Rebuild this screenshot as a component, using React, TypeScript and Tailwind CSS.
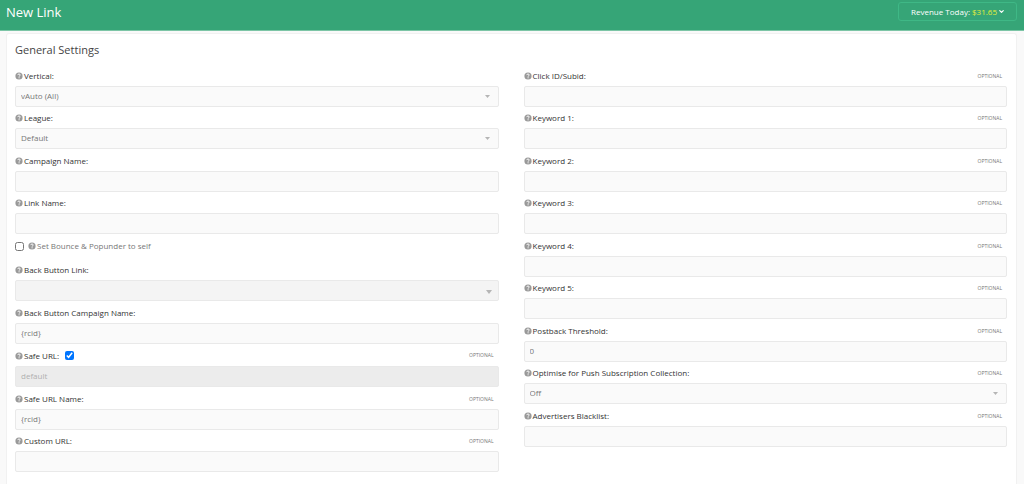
import { ReactNode, useId, useState } from "react";
import { ChevronDown } from "lucide-react";
import clsx from "clsx";

interface FieldProps {
  label: string;
  optional?: boolean;
  value?: string;
  disabled?: boolean;
  options?: string[];
  largeCaret?: boolean;
  tall?: boolean;
  children?: ReactNode;
}

const rowClass = "odd:mb-px even:mb-0.5";

const controlClass =
  "block h-[21px] w-full appearance-none rounded-[2px] border border-[#e9e9e9] px-[5px] pb-0.5 text-[8px] text-[#777] outline-none focus:border-[#36a577]";

function HelpIcon() {
  return (
    <svg viewBox="0 0 16 16" className="size-2 shrink-0">
      <circle cx="8" cy="8" r="7.2" fill="#999" />
      <path
        d="M5.6 6.2C5.7 4.6 6.7 3.9 8 3.9s2.4.8 2.4 2.1C10.4 7.6 8.2 7.6 8.2 9.4"
        fill="none"
        stroke="#fff"
        strokeWidth="1.9"
      />
      <rect x="7.1" y="10.6" width="2.1" height="2" fill="#fff" />
    </svg>
  );
}

function Caret({ large }: { large?: boolean }) {
  return (
    <svg
      viewBox="0 0 6 3"
      preserveAspectRatio="none"
      className={clsx(
        "pointer-events-none absolute fill-[#b5b5b5]",
        large ? "right-[7px] top-2.5 h-1 w-1.5" : "right-[9px] top-[9px] h-[3px] w-[5px]",
      )}
    >
      <path d="M0 0h6L3 3z" />
    </svg>
  );
}

function Field({
  label,
  optional,
  value = "",
  disabled,
  options,
  largeCaret,
  tall,
  children,
}: FieldProps) {
  const id = useId();
  const [current, setCurrent] = useState(value);

  return (
    <div className={rowClass}>
      <div className={clsx("flex items-center", tall ? "h-[21px]" : "h-5")}>
        <label
          htmlFor={id}
          className="flex items-center gap-px text-[8px] text-[#333]"
        >
          <HelpIcon />
          {label}
        </label>
        {children}
        {optional && (
          <span className="ml-auto pr-[5px] pt-px text-[5px] text-[#777]">
            OPTIONAL
          </span>
        )}
      </div>
      {options ? (
        <div className="relative">
          <select
            id={id}
            value={current}
            onChange={(e) => setCurrent(e.target.value)}
            className={clsx(
              controlClass,
              largeCaret ? "bg-[#f4f4f4]" : "bg-[#fafafa]",
            )}
          >
            {options.map((option) => (
              <option key={option}>{option}</option>
            ))}
          </select>
          <Caret large={largeCaret} />
        </div>
      ) : (
        <input
          id={id}
          type="text"
          value={current}
          disabled={disabled}
          onChange={(e) => setCurrent(e.target.value)}
          className={clsx(
            controlClass,
            disabled ? "bg-[#ececec] text-[#b0b0b0]" : "bg-[#fafafa]",
          )}
        />
      )}
    </div>
  );
}

export default function App() {
  const [bounceToSelf, setBounceToSelf] = useState(false);
  const [safeUrl, setSafeUrl] = useState(true);

  return (
    <div className="flex min-h-screen flex-col bg-[#f9f9f9] font-['Open_Sans',sans-serif]">
      <header className="flex h-[31px] items-start justify-between border-b border-[#7cc5a6] bg-[#36a577] pl-1.5 pr-[7px] pt-0.5">
        <h1 className="text-[13px] leading-5 text-white">New Link</h1>
        <button
          type="button"
          className="flex h-[19px] items-center rounded-[3px] border border-[#3fb886] pl-3 pr-[11px] text-[8px] font-medium text-white"
        >
          Revenue Today:
          <span className="ml-0.5 text-[#e3ee3a]">$31.65</span>
          <ChevronDown className="ml-px size-[7px]" strokeWidth={4} />
        </button>
      </header>

      <main className="ml-1.5 mr-[7px] mt-0.5 flex-1 rounded-t-[3px] border border-b-0 border-[#f1f1f1] bg-white pb-3 pl-2 pr-[9px]">
        <h2 className="h-8 text-[11px] leading-8 font-medium text-[#444]">
          General Settings
        </h2>

        <form className="grid grid-cols-2 gap-x-[25px]">
          <div>
            <Field label="Vertical:" value="vAuto (All)" options={["vAuto (All)"]} />
            <Field label="League:" value="Default" options={["Default"]} />
            <Field label="Campaign Name:" />
            <Field label="Link Name:" />

            <div className="mb-1 flex h-5 items-center">
              <input
                id="bounce"
                type="checkbox"
                checked={bounceToSelf}
                onChange={(e) => setBounceToSelf(e.target.checked)}
                className="size-[9px]"
              />
              <label
                htmlFor="bounce"
                className="ml-1 flex items-center gap-px text-[8px] text-[#777]"
              >
                <HelpIcon />
                Set Bounce &amp; Popunder to self
              </label>
            </div>

            <Field label="Back Button Link:" options={[""]} largeCaret />
            <Field label="Back Button Campaign Name:" value="{rcid}" />
            <Field label="Safe URL:" value="default" disabled={safeUrl} optional tall>
              <input
                type="checkbox"
                aria-label="Use default safe URL"
                checked={safeUrl}
                onChange={(e) => setSafeUrl(e.target.checked)}
                className="ml-1.5 size-[9px]"
              />
            </Field>
            <Field label="Safe URL Name:" value="{rcid}" optional />
            <Field label="Custom URL:" optional />
          </div>

          <div>
            <Field label="Click ID/Subid:" optional />
            <Field label="Keyword 1:" optional />
            <Field label="Keyword 2:" optional />
            <Field label="Keyword 3:" optional />
            <Field label="Keyword 4:" optional />
            <Field label="Keyword 5:" optional />
            <Field label="Postback Threshold:" value="0" optional />
            <Field
              label="Optimise for Push Subscription Collection:"
              value="Off"
              options={["Off", "On"]}
              optional
            />
            <Field label="Advertisers Blacklist:" optional />
          </div>
        </form>
      </main>
    </div>
  );
}
